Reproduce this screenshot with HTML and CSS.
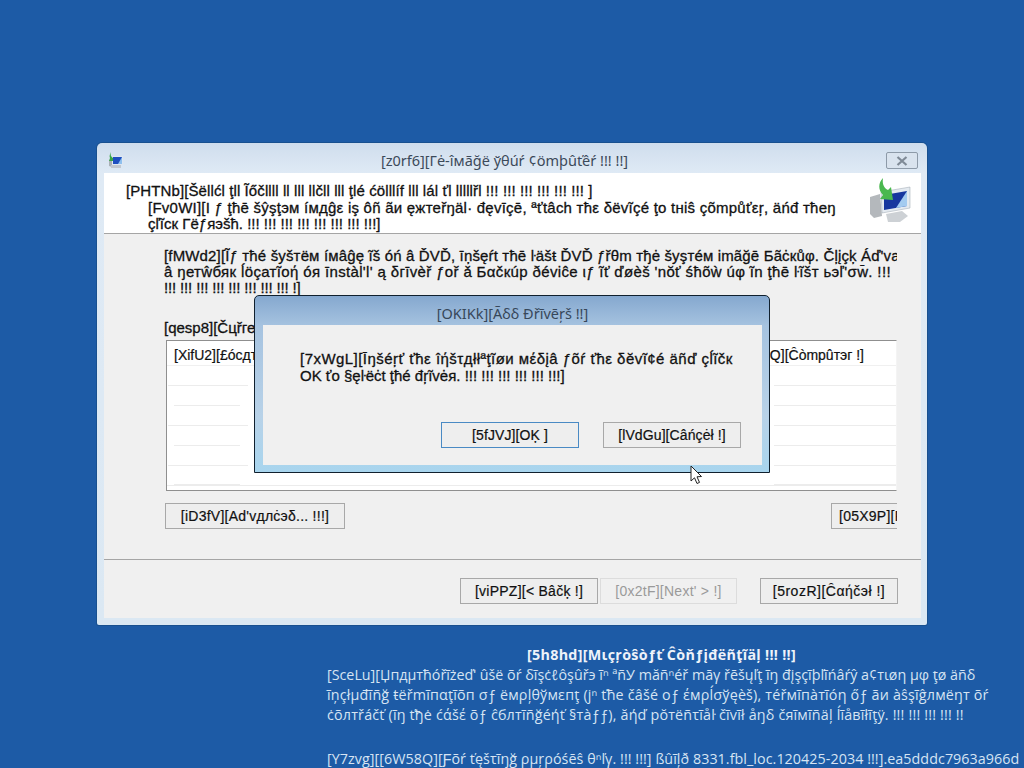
FILE: index.html
```html
<!DOCTYPE html>
<html lang="en">
<head>
    <meta charset="UTF-8">
    <title>Re-image your computer</title>
    <link rel="stylesheet" href="styles.css">
</head>
<body>
    <div class="wizard">
        <div class="titlebar">
            <svg class="app-icon" viewBox="0 0 16 16" width="16" height="16">
                <path d="M2 8 L5 7 L5 15 L2 14 Z" fill="#a9b0b6" />
                <rect x="4" y="13" width="10" height="3" fill="#c2c7cf" />
                <rect x="5" y="4" width="11" height="9" fill="#dfe7f2" />
                <rect x="6" y="5" width="9" height="7" fill="#1f4fc0" />
                <path d="M11 12 L15 5 L15 12 Z" fill="#8fc0ee" />
                <path d="M4 0 C3 3 4 5 6 6 L6 9 L2 9 L3 6 C2 4 3 2 4 0 Z" fill="#3aa648" />
            </svg>
            <span class="title-text">[z0rf6][Гė-îмãğë ўθúŕ ¢ömþûťêŕ !!! !!]</span>
            <div class="close-btn">
                <svg viewBox="0 0 12 10" width="12" height="10">
                    <path d="M1.5 1 L10.5 9 M10.5 1 L1.5 9" stroke="#7f8a96" stroke-width="2.2" fill="none" />
                </svg>
            </div>
        </div>
        <div class="header">
            <div class="header-title">[PHTNb][Šëllćl ţll Ĩőčllll ll lll llčll lll ţlé ćölllíf lll lál ťl lllllřl !!! !!! !!! !!! !!! !!! ]</div>
            <div class="header-desc">
                <div class="spaced-md">[Fv0WI][Ι ƒ ţħē šŷşţэм íмдĝε iş ôñ ãи ęжтеřŋäl· đęvīçē, ªťtâch тħε δëvĩçé ţo tнiŝ çõmpůťεŗ, äńđ тħеŋ</div>
                <div>çľĩcк Γëƒяэšћ. !!! !!! !!! !!! !!! !!! !!! !!!]</div>
            </div>
            <svg class="header-icon" viewBox="0 0 44 48" width="44" height="48">
                <path d="M2 21 L12 18 L14 40 L6 42 L2 38 Z" fill="#b4b8bc" />
                <path d="M18 38 L34 35 L40 40 L32 46 L20 46 Z" fill="#cdd1d5" />
                <path d="M13 16 L42 11 L42 32 L14 37 Z" fill="#e4eaf0" stroke="#9aa4ae" stroke-width="0.5" />
                <path d="M16 19 L39 15 L39 30 L16 34 Z" fill="#17379f" />
                <path d="M28 32 L39 15 L39 30 Z" fill="#a3cbf0" />
                <path d="M15 2 C14 8 16 12 20 14 L23 11 L25 24 L12 23 L15 19 C10 14 10 7 15 2 Z" fill="#4ab84f" />
            </svg>
        </div>
        <div class="content">
            <div class="content-clip">
                <div class="intro">
                    <div class="spaced-sm">[fMWd2][Ĩƒ тħé šуšтём íмâĝę ĩš óń â ĎVĎ, īņšęŕt тħē ŀäšŧ ĎVĎ ƒřθm тђė šуşтéм imãğē Бãċкůφ. Čļįçķ Áď'vanced</div>
                    <div class="spaced-lg">â ŋетŵбяк ĺöçатĩοή óя īnstàl'l' ą δгīvèř ƒoř ǎ Бαčкúр ðéviĉe ιƒ ĩť ďøèš 'nŏť śħõẁ úφ ĩn ţħē ŀĩšт ьэľ'σw̄. !!!</div>
                    <div class="tight">!!! !!! !!! !!! !!! !!! !!! !!! !]</div>
                </div>
                <div class="list-label">[qesp8][Čцřгеñт</div>
                <div class="list">
                    <div class="list-head">
                        <span>[XifU2][£óсдтîöñ !!!</span>
                        <span class="list-head-right">Q][Ĉòmpûтэг !]</span>
                    </div>
                    <div class="list-row"></div>
                    <div class="list-row"></div>
                    <div class="list-row"></div>
                    <div class="list-row"></div>
                    <div class="list-row"></div>
                    <div class="list-row list-row-full"></div>
                </div>
                <div class="list-actions">
                    <button class="btn btn-advanced">[iD3fV][Ad'vдлċэδ... !!!]</button>
                    <button class="btn btn-refresh">[05X9P][Find</button>
                </div>
            </div>
        </div>
        <div class="footer">
            <button class="btn">[viPPZ][&lt; Bâčķ !]</button>
            <button class="btn btn-disabled">[0x2tF][Next' &gt; !]</button>
            <button class="btn btn-cancel">[5rozR][Ĉαήčэł !]</button>
        </div>
    </div>

    <div class="dialog">
        <div class="dialog-title">[OKIKk][Ãδδ Ðřĩvēŗš !!]</div>
        <div class="dialog-body">
            <div class="dialog-text">
                <div class="spaced-xl">[7xWgL][Īŋšéŗť ťħε îήšτдłłªţĩøи мέδįâ ƒõŕ ťħε δĕvĩ¢é äñď çĺĩčк</div>
                <div>OK ťo §ęŀëċt ţħé đŗĩvėя. !!! !!! !!! !!! !!! !!!]</div>
            </div>
            <div class="dialog-actions">
                <button class="btn btn-default">[5fJVJ][OĶ ]</button>
                <button class="btn">[lVdGu][Câńçėł !]</button>
            </div>
        </div>
    </div>

    <svg class="cursor" viewBox="0 0 14 21" width="14" height="21">
        <path d="M1 1 L1 16 L4.5 12.8 L7 18.5 L9.5 17.4 L7 11.8 L11.5 11.5 Z" fill="#fff" stroke="#222" stroke-width="1" />
    </svg>

    <div class="notice">
        <div class="notice-title">[5h8hd][Mιçŗòŝòƒť Ĉòňƒįđëñţĩäļ !!! !!]</div>
        <div class="notice-text">
            <div>[SceLu][Џпдμтħóřĩżеďʹ ûšë õŕ δĩşċℓôşûřэ ĩⁿ ªñУ măñⁿéř māγ řēšųľţ ĩŋ đįşçĩþľĩńâŕŷ а¢тιøη μφ ţø äñδ</div>
            <div class="notice-wide">ĩņçłμđĩñğ ŧëřmĩпαţĩõп σƒ ëмρļθўмεпţ (јⁿ ťħе čâšé οƒ έмρĺσўęèš), тéřмĩпàтĩóη őƒ ãи àŝşĩĝлмëŋт õŕ</div>
            <div class="notice-wide">ċõлтřáčť (ĩŋ ťђė ćάšέ õƒ ĉблтĩñğéήť §тàƒƒ), ăήď рŏтëñτĩåŀ čĩvĩł åŋδ čяĩмĩñäļ ĺĩåвĩłĩţÿ. !!! !!! !!! !!! !!</div>
            <div class="notice-build">[Y7zvg][[6W58Q][Ƒõŕ ťęšτĩŋğ ρμŗρóśēŝ θⁿľγ. !!! !!!] ßûĩļð 8331.fbl_loc.120425-2034 !!!].ea5dddc7963a966d</div>
        </div>
    </div>
</body>
</html>
```

FILE: styles.css
```css
html, body {
    margin: 0;
    height: 100%;
}

body {
    position: relative;
    width: 1024px;
    height: 768px;
    overflow: hidden;
    background-color: #1d5ba6;
    font-family: 'Liberation Sans', sans-serif;
    font-size: 15px;
    color: #111;
    padding-top: 143px;
    box-sizing: border-box;
}

.spaced-sm {
    letter-spacing: 0.15px;
}

.spaced-md {
    letter-spacing: 0.24px;
}

.spaced-lg {
    letter-spacing: 0.35px;
}

.spaced-xl {
    letter-spacing: 0.46px;
}

.tight {
    letter-spacing: -0.15px;
}

.wizard {
    width: 830px;
    height: 482px;
    margin-left: 97px;
    box-sizing: border-box;
    padding: 0 6px 7px 7px;
    display: flex;
    flex-direction: column;
    background: linear-gradient(#cfdded, #dfeaf5 30px, #dbe8f3);
    border-radius: 5px 5px 2px 2px;
    box-shadow: 0 0 0 1px #18508f;
}

.titlebar {
    height: 30px;
    flex: none;
    box-sizing: border-box;
    padding-top: 4px;
    display: flex;
    align-items: center;
    position: relative;
}

.app-icon {
    margin: 0 0 0 3px;
}

.title-text {
    position: absolute;
    left: 0;
    right: 16px;
    text-align: center;
    font-family: 'Noto Sans', sans-serif;
    font-size: 14.5px;
    color: #3c4a5a;
}

.close-btn {
    position: absolute;
    right: 3px;
    top: 9px;
    width: 30px;
    height: 15px;
    border: 1px solid #8d9aa8;
    border-radius: 2px;
    display: flex;
    align-items: center;
    justify-content: center;
    background: #d9e3ee;
}

.header {
    height: 61px;
    flex: none;
    box-sizing: border-box;
    background: #fff;
    border-bottom: 1px solid #a5a5a5;
    padding-top: 10px;
    padding-left: 22px;
    position: relative;
    line-height: 16.5px;
    white-space: nowrap;
    -webkit-text-stroke: 0.3px #111;
}

.header-title {
    letter-spacing: 0.1px;
}

.header-desc {
    padding-left: 22px;
}

.header-icon {
    position: absolute;
    right: 9px;
    top: 3px;
}

.content {
    height: 326px;
    flex: none;
    box-sizing: border-box;
    background: #f0f0f0;
    padding-top: 14px;
    padding-left: 60px;
    border-bottom: 1px solid #a5a5a5;
}

.content-clip {
    width: 733px;
    overflow: hidden;
    white-space: nowrap;
    -webkit-text-stroke: 0.3px #111;
}

.intro {
    line-height: 16px;
}

.list-label {
    margin-top: 24px;
    line-height: 16px;
}

.list {
    margin-top: 4px;
    width: 731px;
    margin-left: 2px;
    height: 151px;
    box-sizing: border-box;
    border: 1px solid #8f8f8f;
    border-right: 1px solid #f4f4f4;
    background: #fff;
    font-size: 14px;
    -webkit-text-stroke: 0.2px #111;
    overflow: hidden;
}

.list-head {
    height: 25px;
    padding: 4px 32px 0 7px;
    line-height: 20px;
    display: flex;
    justify-content: space-between;
    border-bottom: 1px solid #f0f0f0;
    box-sizing: border-box;
}

.list-row {
    height: 20px;
    box-sizing: border-box;
    display: flex;
    justify-content: space-between;
    align-items: flex-end;
}

/* only the stretches of the row rules that show around the dialog */
.list-row::before,
.list-row::after {
    content: "";
    height: 1px;
    background: #ececec;
}

.list-row::before {
    width: 80px;
    margin-left: 1px;
}

.list-row::after {
    width: 122px;
}

.list-row:nth-child(odd)::before {
    width: 66px;
    margin-left: 7px;
}

.list-row-full {
    border-bottom: 1px solid #ececec;
}

.list-actions {
    margin-top: 12px;
    padding-left: 1px;
    display: flex;
    justify-content: space-between;
}

.btn {
    width: 138px;
    height: 26px;
    padding: 0;
    flex: none;
    box-sizing: border-box;
    background: #eeeeee;
    border: 1px solid #a8a8a8;
    font-family: 'Liberation Sans', sans-serif;
    font-size: 14px;
    letter-spacing: 0.25px;
    color: #111;
    white-space: nowrap;
    -webkit-text-stroke: 0.2px #111;
}

.btn-advanced {
    width: 180px;
}

.btn-refresh {
    margin-right: -72px;
    text-align: left;
    padding-left: 7px;
}

.btn-disabled {
    width: 137px;
    color: #9a9a9a;
    border-color: #dcdcdc;
    background: #f0f0f0;
    -webkit-text-stroke: 0;
}

.btn-cancel {
    margin-left: 21px;
    letter-spacing: 0.5px;
}

.footer {
    flex: 1;
    display: flex;
    justify-content: flex-end;
    align-items: flex-start;
    gap: 2px;
    padding: 18px 23px 0 0;
    background: #f0f0f0;
}

.dialog {
    position: absolute;
    left: 254px;
    top: 295px;
    width: 516px;
    height: 178px;
    box-sizing: border-box;
    padding: 0 7px 7px 8px;
    display: flex;
    flex-direction: column;
    border: 1px solid #10202e;
    border-radius: 5px 5px 0 0;
    background: linear-gradient(#85a8cf, #a6c3e0 30px, #b8d2e8 120px, #a8d5ee);
}

.dialog-title {
    height: 29px;
    line-height: 34px;
    text-align: center;
    font-family: 'Noto Sans', sans-serif;
    font-size: 14.5px;
    color: #37475a;
    flex: none;
}

.dialog-body {
    flex: 1;
    background: #f0f0f0;
    padding: 25px 21px 0 37px;
    display: flex;
    flex-direction: column;
    -webkit-text-stroke: 0.3px #111;
}

.dialog-text {
    line-height: 17px;
    white-space: nowrap;
}

.dialog-actions {
    margin-top: 38px;
    display: flex;
    justify-content: flex-end;
    gap: 24px;
}

.dialog-actions .btn {
    letter-spacing: 0.1px;
}

.btn-default {
    border-color: #4a8ac4;
}

.cursor {
    position: absolute;
    left: 690px;
    top: 465px;
}

.notice {
    margin: 20px 0 0 327px;
    width: 697px;
    color: #d6e4f3;
    font-family: 'Open Sans', sans-serif;
    font-size: 14.3px;
    white-space: nowrap;
}

.notice-title {
    margin-left: 200px;
    font-weight: bold;
    line-height: 20px;
    letter-spacing: 0.3px;
    color: #eef3fa;
}

.notice-text {
    line-height: 20px;
}

.notice-wide {
    letter-spacing: 0.19px;
}

.notice-build {
    margin-top: 24px;
    letter-spacing: 0.06px;
}
```
